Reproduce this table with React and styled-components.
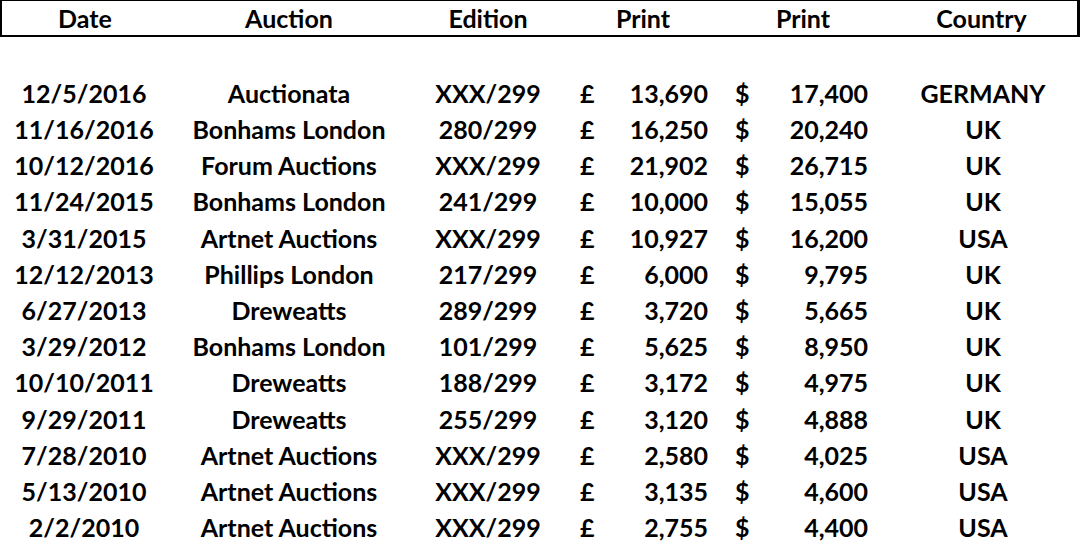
import React from 'react';
import styled, { createGlobalStyle } from 'styled-components';

const GlobalStyle = createGlobalStyle`
  html, body {
    margin: 0;
    padding: 0;
    background: #ffffff;
    overflow: hidden;
  }
  body {
    font-family: Lato, "Open Sans", "Liberation Sans", sans-serif;
    color: #000;
  }
`;

const COLUMNS = '168px 242px 156px 154px 166px 1fr';

const Sheet = styled.div`
  width: 1080px;
  height: 546px;
  display: flex;
  flex-direction: column;
  font-weight: 700;
  font-size: 25px;
`;

const HeaderRow = styled.div`
  display: grid;
  grid-template-columns: 166px 242px 156px 154px 166px 1fr;
  height: 37px;
  width: 1080px;
  box-sizing: border-box;
  padding-top: 1px;
  border-style: solid;
  border-color: #000;
  border-width: 1px 3px 2px 2px;
`;

const Spacer = styled.div`
  height: 38px;
`;

const Row = styled.div`
  display: grid;
  grid-template-columns: ${COLUMNS};
  height: 36.25px;
`;

const Cell = styled.div`
  display: flex;
  align-items: center;
  justify-content: center;
  white-space: nowrap;
  line-height: 1;
`;

const MoneyCell = styled.div`
  display: flex;
  align-items: center;
  justify-content: space-between;
  white-space: nowrap;
  line-height: 1;
  padding: 0 ${(p) => p.$right}px 0 ${(p) => p.$left}px;
`;

const rows = [
  ['12/5/2016', 'Auctionata', 'XXX/299', '13,690', '17,400', 'GERMANY'],
  ['11/16/2016', 'Bonhams London', '280/299', '16,250', '20,240', 'UK'],
  ['10/12/2016', 'Forum Auctions', 'XXX/299', '21,902', '26,715', 'UK'],
  ['11/24/2015', 'Bonhams London', '241/299', '10,000', '15,055', 'UK'],
  ['3/31/2015', 'Artnet Auctions', 'XXX/299', '10,927', '16,200', 'USA'],
  ['12/12/2013', 'Phillips London', '217/299', '6,000', '9,795', 'UK'],
  ['6/27/2013', 'Dreweatts', '289/299', '3,720', '5,665', 'UK'],
  ['3/29/2012', 'Bonhams London', '101/299', '5,625', '8,950', 'UK'],
  ['10/10/2011', 'Dreweatts', '188/299', '3,172', '4,975', 'UK'],
  ['9/29/2011', 'Dreweatts', '255/299', '3,120', '4,888', 'UK'],
  ['7/28/2010', 'Artnet Auctions', 'XXX/299', '2,580', '4,025', 'USA'],
  ['5/13/2010', 'Artnet Auctions', 'XXX/299', '3,135', '4,600', 'USA'],
  ['2/2/2010', 'Artnet Auctions', 'XXX/299', '2,755', '4,400', 'USA'],
];

export default function App() {
  return (
    <>
      <GlobalStyle />
      <Sheet>
        <HeaderRow>
          <Cell>Date</Cell>
          <Cell>Auction</Cell>
          <Cell>Edition</Cell>
          <Cell>Print</Cell>
          <Cell>Print</Cell>
          <Cell>Country</Cell>
        </HeaderRow>
        <Spacer />
        {rows.map(([date, auction, edition, gbp, usd, country]) => (
          <Row key={date}>
            <Cell>{date}</Cell>
            <Cell>{auction}</Cell>
            <Cell>{edition}</Cell>
            <MoneyCell $left={14} $right={12}>
              <span>£</span>
              <span>{gbp}</span>
            </MoneyCell>
            <MoneyCell $left={15} $right={18}>
              <span>$</span>
              <span>{usd}</span>
            </MoneyCell>
            <Cell>{country}</Cell>
          </Row>
        ))}
      </Sheet>
    </>
  );
}
